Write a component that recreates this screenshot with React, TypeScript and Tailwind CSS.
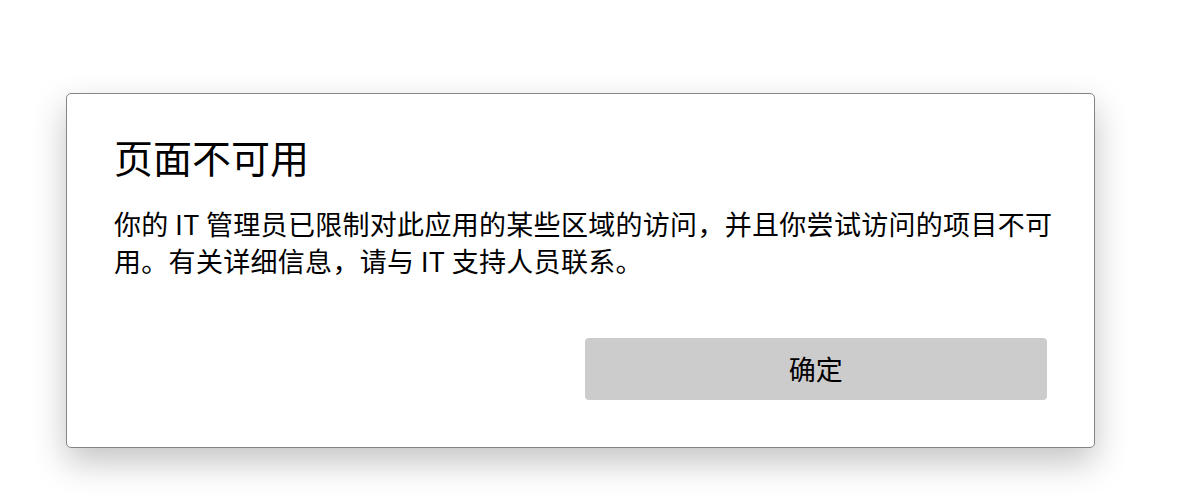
import React from "react";

export default function App() {
  return (
    <div
      className="min-h-[500px] w-full bg-white pt-[93px] pl-[66px]"
      style={{ fontFamily: '"Noto Sans CJK SC", "Noto Sans", sans-serif' }}
    >
      {/* Dialog */}
      <div className="w-[1029px] rounded-[5px] border border-[#858585] bg-white px-[47px] pt-[38px] pb-[47px] shadow-[0_14px_34px_rgba(0,0,0,0.24)]">
        <h1 className="text-[39px] leading-[48px] font-normal text-black">
          页面不可用
        </h1>
        <p className="mt-[25px] text-[27px] leading-[37px] tracking-[0.3px] text-black">
          <span className="block whitespace-nowrap">
            你的 IT 管理员已限制对此应用的某些区域的访问，并且你尝试访问的项目不可
          </span>
          <span className="block whitespace-nowrap">
            用。有关详细信息，请与 IT 支持人员联系。
          </span>
        </p>

        <div className="mt-[59px] grid grid-cols-2 gap-2">
          <div />
          <button className="h-[62px] rounded-[4px] bg-[#cccccc] text-[27px] text-black">
            确定
          </button>
        </div>
      </div>
    </div>
  );
}
